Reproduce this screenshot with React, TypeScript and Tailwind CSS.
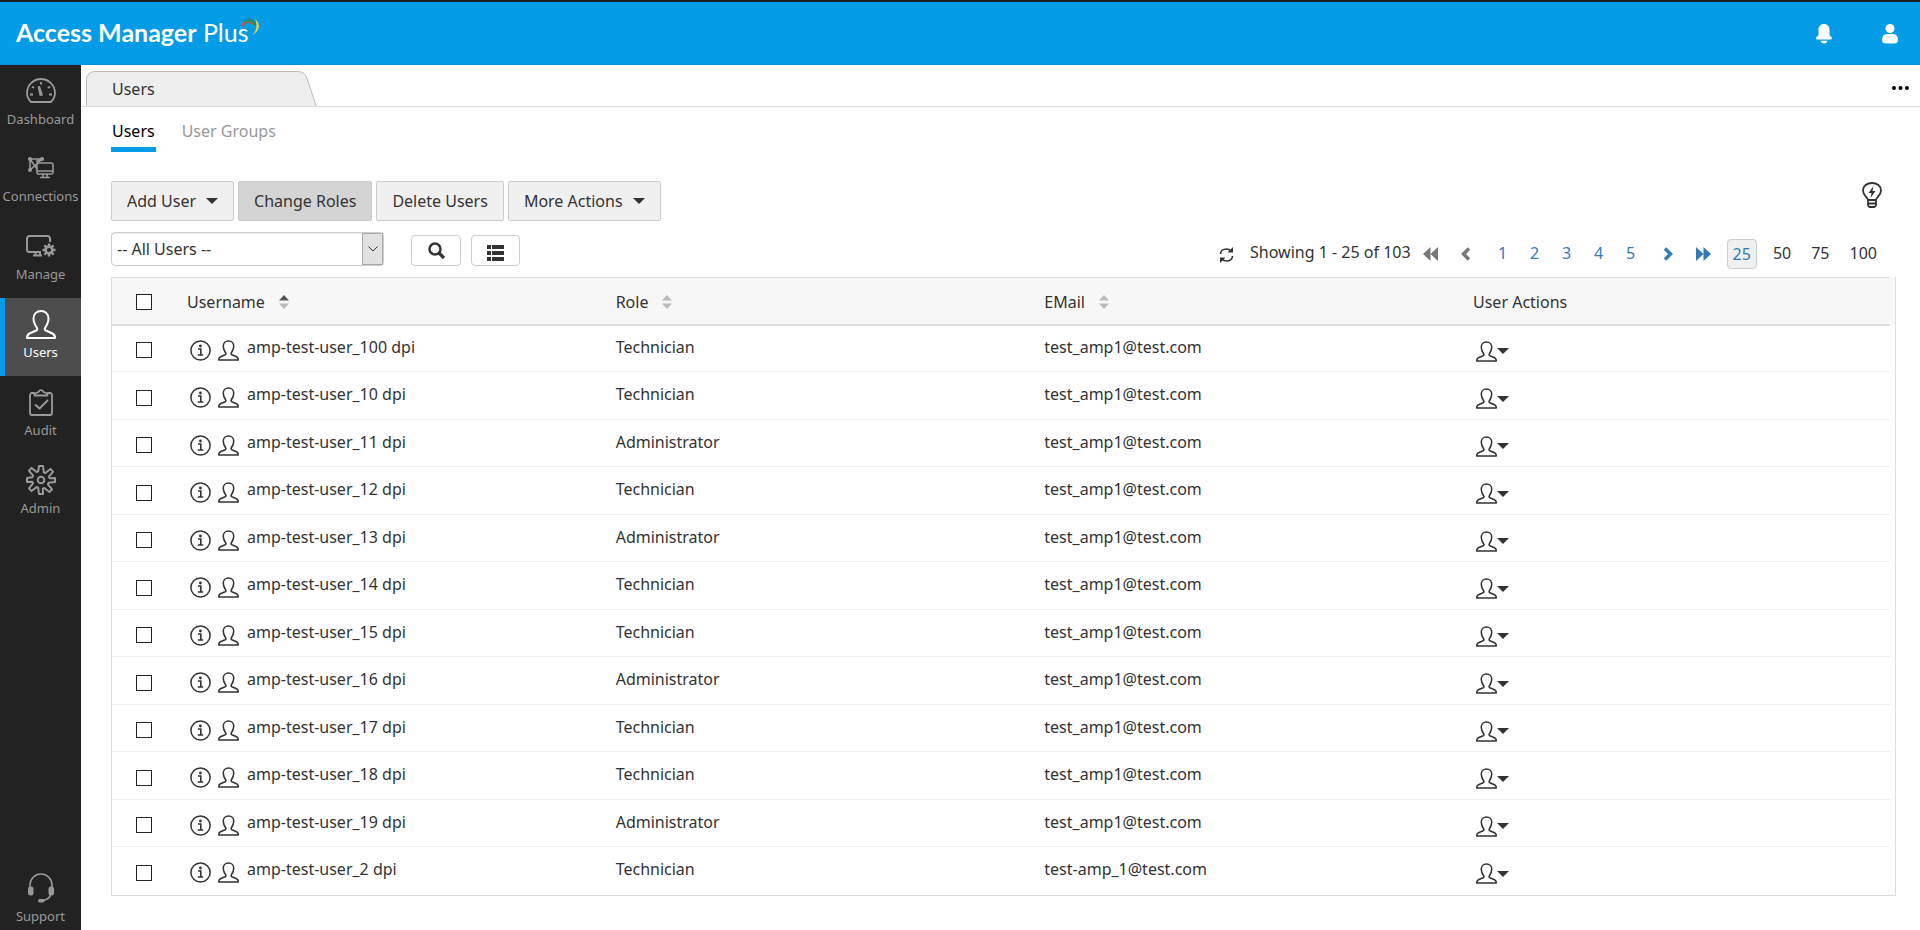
import type { ReactNode, SVGProps } from 'react';

type IconProps = SVGProps<SVGSVGElement>;

const navItems = [
  { label: 'Dashboard', icon: GaugeIcon },
  { label: 'Connections', icon: ConnectionsIcon },
  { label: 'Manage', icon: ManageIcon },
  { label: 'Users', icon: PersonIcon },
  { label: 'Audit', icon: ClipboardIcon },
  { label: 'Admin', icon: GearIcon },
];

const users = [
  { name: 'amp-test-user_100 dpi', role: 'Technician', email: 'test_amp1@test.com' },
  { name: 'amp-test-user_10 dpi', role: 'Technician', email: 'test_amp1@test.com' },
  { name: 'amp-test-user_11 dpi', role: 'Administrator', email: 'test_amp1@test.com' },
  { name: 'amp-test-user_12 dpi', role: 'Technician', email: 'test_amp1@test.com' },
  { name: 'amp-test-user_13 dpi', role: 'Administrator', email: 'test_amp1@test.com' },
  { name: 'amp-test-user_14 dpi', role: 'Technician', email: 'test_amp1@test.com' },
  { name: 'amp-test-user_15 dpi', role: 'Technician', email: 'test_amp1@test.com' },
  { name: 'amp-test-user_16 dpi', role: 'Administrator', email: 'test_amp1@test.com' },
  { name: 'amp-test-user_17 dpi', role: 'Technician', email: 'test_amp1@test.com' },
  { name: 'amp-test-user_18 dpi', role: 'Technician', email: 'test_amp1@test.com' },
  { name: 'amp-test-user_19 dpi', role: 'Administrator', email: 'test_amp1@test.com' },
  { name: 'amp-test-user_2 dpi', role: 'Technician', email: 'test-amp_1@test.com' },
];

function GaugeIcon(props: IconProps) {
  return (
    <svg width="30" height="26" viewBox="0 0 30 26" fill="none" stroke="currentColor" strokeWidth="1.8" {...props}>
      <path d="M5 24C2.500 21.500 1 18.500 1 15a14 14 0 0 1 28 0c0 3.500-1.500 6.500-4 9z" strokeLinejoin="round" />
      <path d="M11.500 8.500l2.200 9.500 3.300-.5-3-9.500z" fill="currentColor" stroke="none" />
      <path d="M4 16.500h3M23 16.500h3M6 8.500l2 1.500M24 8.500l-2 1.500M15 4v2.500" strokeWidth="1.8" />
    </svg>
  );
}

function ConnectionsIcon(props: IconProps) {
  return (
    <svg width="26" height="22" viewBox="0 0 26 22" fill="none" stroke="currentColor" strokeWidth="1.6" {...props}>
      <path d="M2 2h12L2 13zM2 2l7 10M14 2L8 4.500" />
      <rect x="9" y="6" width="16" height="11" rx="1.500" fill="#222" />
      <path d="M9 14h16M15 17v3M19 17v3M12 20.500h10" />
      <g fill="currentColor" stroke="none">
        <circle cx="2" cy="2" r="2" />
        <circle cx="14" cy="2" r="2" />
        <circle cx="2" cy="13" r="2" />
      </g>
    </svg>
  );
}

function ManageIcon(props: IconProps) {
  return (
    <svg width="30" height="22" viewBox="0 0 30 22" fill="none" stroke="currentColor" strokeWidth="2" {...props}>
      <path d="M15 17H3.500A2.500 2.500 0 0 1 1 14.500v-11A2.500 2.500 0 0 1 3.500 1h18A2.500 2.500 0 0 1 24 3.500V7M9.500 17v3M14 17v3M7 20.500h9" />
      <circle cx="23" cy="15" r="3.400" strokeWidth="2.600" />
      <path d="M23 8.500v3M23 18.500v3M16.500 15h3M26.500 15h3M18.400 10.400l2.100 2.100M25.500 17.500l2.100 2.100M18.400 19.600l2.100-2.100M25.500 12.500l2.100-2.100" strokeWidth="2.400" />
    </svg>
  );
}

function PersonIcon(props: IconProps) {
  return (
    <svg width="30" height="29" viewBox="0 0 30 29" fill="none" stroke="currentColor" strokeWidth="2" strokeLinejoin="round" {...props}>
      <path d="M15 1c-4.500 0-7.500 3.200-7.500 7.500 0 4 1.500 6.500 3.500 9.500.5 1 .2 2-.8 2.500l-6.700 3C1.500 24.500 1 26 1 28h28c0-2-.5-3.500-2.500-4.500l-6.700-3c-1-.5-1.300-1.500-.8-2.500 2-3 3.500-5.500 3.500-9.500C22.500 4.200 19.500 1 15 1z" />
    </svg>
  );
}

function ClipboardIcon(props: IconProps) {
  return (
    <svg width="24" height="28" viewBox="0 0 24 28" fill="none" stroke="currentColor" strokeWidth="1.8" strokeLinejoin="round" {...props}>
      <path d="M6 5H3a2 2 0 0 0-2 2v18a2 2 0 0 0 2 2h18a2 2 0 0 0 2-2V7a2 2 0 0 0-2-2h-3" />
      <path d="M5.500 7.500V5.800L9.500 4a2.600 2.600 0 0 1 5 0l4 1.800v1.700z" />
      <path d="M6 16.500l4.500 4 8.500-8.500" strokeWidth="2" />
    </svg>
  );
}

function GearIcon(props: IconProps) {
  return (
    <svg width="30" height="30" viewBox="0 0 30 30" fill="none" stroke="currentColor" strokeWidth="2" strokeLinejoin="round" {...props}>
      <circle cx="15" cy="15" r="3.300" />
      <path d="M13 1h4l.8 6.400 1.600.7 5-4.200 2.700 2.700-4.200 5 .7 1.600L29 13v4l-6.400.8-.7 1.600 4.200 5-2.700 2.700-5-4.200-1.600.7L17 29h-4l-.8-6.400-1.600-.7-5 4.200-2.700-2.700 4.200-5-.7-1.600L1 17v-4l5.400-.8.7-1.600-4.200-5 2.700-2.700 5 4.200 1.600-.7z" />
    </svg>
  );
}

function HeadsetIcon(props: IconProps) {
  return (
    <svg width="28" height="30" viewBox="0 0 28 30" fill="none" stroke="currentColor" strokeWidth="1.600" {...props}>
      <path d="M3 14v-2a11 11 0 0 1 22 0v2M24 21c-1 4-4 6-9 6.500" />
      <g fill="currentColor" stroke="none">
        <rect x="1" y="13.500" width="5.500" height="9" rx="2.500" />
        <rect x="21.500" y="13.500" width="5.500" height="9" rx="2.500" />
        <rect x="11" y="26" width="6.500" height="3.500" rx="1.700" />
      </g>
    </svg>
  );
}

function InfoIcon(props: IconProps) {
  return (
    <svg width="21" height="21" viewBox="0 0 21 21" fill="none" stroke="currentColor" {...props}>
      <circle cx="10.500" cy="10.500" r="9.600" strokeWidth="1.500" />
      <path d="M8 9h2.800v5.700M7.800 15h5.400" strokeWidth="1.600" />
      <circle cx="10.400" cy="6" r="1.400" fill="currentColor" stroke="none" />
    </svg>
  );
}

function SmallPersonIcon(props: IconProps) {
  return <PersonIcon width="21" height="21" strokeWidth="2.200" {...props} />;
}

function Caret() {
  return (
    <svg width="12" height="6" viewBox="0 0 12 6" fill="currentColor" aria-hidden="true">
      <path d="M0 0h12L6 6z" />
    </svg>
  );
}

function SortArrows({ active = false }: { active?: boolean }) {
  return (
    <svg width="10" height="14" viewBox="0 0 10 14" aria-hidden="true">
      <path d="M5 0l5 5.500H0z" fill={active ? '#555' : '#bbb'} />
      <path d="M5 14L0 8.500h10z" fill="#bbb" />
    </svg>
  );
}

function ToolbarButton({ children, pressed = false }: { children: ReactNode; pressed?: boolean }) {
  return (
    <button
      type="button"
      className={`flex h-10 items-center gap-[10px] rounded-xs border border-[#ccc] px-[15px] ${
        pressed ? 'bg-[#d4d4d4]' : 'bg-[#f0f0f0]'
      }`}
    >
      {children}
    </button>
  );
}

function Pager() {
  return (
    <nav aria-label="Pages" className="flex items-center text-[#337ab7]">
      <button type="button" aria-label="Refresh" className="mr-4 pt-[2px] text-[#333]">
        <svg width="15" height="16" viewBox="0 0 15 16" fill="none" stroke="currentColor" strokeWidth="1.700">
          <path d="M1.500 7C1.500 4 4 2 7.500 2c2 0 3.500.8 4.500 2M13.500 9c0 3-2.500 5-6 5-2 0-3.500-.8-4.500-2" />
          <path d="M14 0v5.500H8.500zM1 16v-5.500h5.500z" fill="currentColor" stroke="none" />
        </svg>
      </button>
      <span className="mr-3 pb-1 text-[#333]">Showing 1 - 25 of 103</span>
      <button type="button" aria-label="First page" className="mr-[22px] text-[#777]">
        <svg width="15" height="14" viewBox="0 0 15 14" fill="currentColor">
          <path d="M7.500 0v14L0 7zM15 0v14L7.500 7z" />
        </svg>
      </button>
      <button type="button" aria-label="Previous page" className="text-[#777]">
        <svg width="11" height="14" viewBox="0 0 11 14" fill="none" stroke="currentColor" strokeWidth="3.500">
          <path d="M9 1.500L3.500 7 9 12.500" />
        </svg>
      </button>
      <div className="mx-4 flex pb-[2px]">
        {[1, 2, 3, 4, 5].map((page) => (
          <a key={page} href={`#page-${page}`} className="w-8 text-center">
            {page}
          </a>
        ))}
      </div>
      <button type="button" aria-label="Next page">
        <svg width="11" height="14" viewBox="0 0 11 14" fill="none" stroke="currentColor" strokeWidth="3.500">
          <path d="M2 1.500L7.500 7 2 12.500" />
        </svg>
      </button>
      <button type="button" aria-label="Last page" className="ml-[22px]">
        <svg width="15" height="14" viewBox="0 0 15 14" fill="currentColor">
          <path d="M0 0v14l7.500-7zM7.500 0v14L15 7z" />
        </svg>
      </button>
      <a
        href="#show-25"
        className="mx-4 flex h-[30px] items-center rounded-sm border border-[#ccc] bg-[#f0f0f0] px-[5px]"
      >
        25
      </a>
      <div className="flex gap-5 pb-[2px] text-[#333]">
        <a href="#show-50">50</a>
        <a href="#show-75">75</a>
        <a href="#show-100">100</a>
      </div>
    </nav>
  );
}

function Checkbox({ label }: { label: string }) {
  return (
    <input
      type="checkbox"
      aria-label={label}
      className="block size-4 appearance-none border border-[#222] bg-white checked:bg-[#222]"
    />
  );
}

export default function App() {
  return (
    <div className="flex min-h-screen flex-col bg-white font-['Noto_Sans',sans-serif] text-base text-[#333]">
      <header className="flex h-[65px] items-center justify-between border-t-2 border-b border-t-[#1a1a24] border-b-[#0b8fd6] bg-[#049be7] pr-[21px] pl-4 text-white">
        <div className="flex pb-[2px]">
          <h1 className="font-['Lato',sans-serif] text-[25px] leading-8">
            <span className="font-bold">Access Manager</span> Plus
          </h1>
          {/* three-colour swoosh over the last letter */}
          <svg width="19" height="18" viewBox="0 0 19 18" fill="none" className="mt-[2px] -ml-2">
            <path d="M1 8C4 3 9 2.500 13 6" stroke="#c8503c" strokeWidth="2" />
            <path d="M3 3.500C8-.5 14 2 14.500 8" stroke="#12879a" strokeWidth="2.400" />
            <path d="M4 4.500C8 2 12 3 14 7.500" stroke="#2a9a50" strokeWidth="1.200" />
            <path d="M14 1c6 4 5 13-3 16 5-4 5.500-10 3-16z" fill="#f2cf3b" />
          </svg>
        </div>
        <div className="flex items-center gap-[49px] pt-[2px]">
          <button type="button" aria-label="Notifications">
            <svg width="16" height="20" viewBox="0 0 16 20" fill="currentColor">
              <path d="M8 0C4.500 0 2.500 2.500 2.500 6v5.500L.8 12.800C-.5 14 0 15.500 1.500 15.500h13c1.500 0 2-1.500.7-2.700l-1.700-1.300V6C13.500 2.500 11.500 0 8 0zM4.500 16.800h7C11 18.500 9.800 19.500 8 19.500s-3-1-3.500-2.700z" />
            </svg>
          </button>
          <button type="button" aria-label="Account">
            <svg width="18" height="20" viewBox="0 0 18 20" fill="currentColor">
              <circle cx="9" cy="4.500" r="4.500" />
              <path d="M6 10h6c3.500 0 5 3 5 6 0 2.500-1.500 3.500-4 3.500H5c-2.500 0-4-1-4-3.500 0-3 1.500-6 5-6z" />
            </svg>
          </button>
        </div>
      </header>

      <div className="flex flex-1">
        <nav aria-label="Main" className="flex w-[81px] shrink-0 flex-col bg-[#222] text-[13px] leading-5 text-[#999]">
          {navItems.map(({ label, icon: Icon }) => (
            <a
              key={label}
              href={`#${label.toLowerCase()}`}
              className={`flex h-[78px] flex-col items-center pt-[10px] first:h-[77px] ${
                label === 'Users' ? 'border-l-5 border-[#049be7] bg-[#4d4d4d] pr-[5px] text-white' : ''
              }`}
            >
              <span className="mb-[2px] flex h-8 items-center">
                <Icon />
              </span>
              {label}
            </a>
          ))}
          <a href="#support" className="mt-auto flex flex-col items-center pb-1">
            <HeadsetIcon className="mb-[3px]" />
            Support
          </a>
        </nav>

        <main className="min-w-0 flex-1">
          <div className="flex h-[42px] items-end justify-between border-b border-[#ddd] pr-[11px] pl-[5px]">
            <div className="relative h-[35px] w-[231px]">
              <svg width="231" height="35" viewBox="0 0 231 35" className="absolute inset-0">
                <path d="M.5 36V8.500a8 8 0 0 1 8-8h203c5 0 7.500 2 9.500 7l9.500 28.500" fill="#eee" stroke="#bbb" />
              </svg>
              <span className="relative block pt-[6px] pl-[26px]">Users</span>
            </div>
            <button type="button" aria-label="More" className="mb-4 text-black">
              <svg width="17" height="4" viewBox="0 0 17 4" fill="currentColor">
                <circle cx="2" cy="2" r="2" />
                <circle cx="8.500" cy="2" r="2" />
                <circle cx="15" cy="2" r="2" />
              </svg>
            </button>
          </div>

          <div className="pr-6 pl-[30px]">
            <div className="flex gap-[26px] pt-3">
              <a href="#users" className="border-b-5 border-[#049be7] px-px pb-1 text-black">
                Users
              </a>
              <a href="#groups" className="text-[#999]">
                User Groups
              </a>
            </div>

            <div className="mt-[29px] flex items-center gap-1">
              <ToolbarButton>
                Add User <Caret />
              </ToolbarButton>
              <ToolbarButton pressed>Change Roles</ToolbarButton>
              <ToolbarButton>Delete Users</ToolbarButton>
              <ToolbarButton>
                More Actions <Caret />
              </ToolbarButton>
              <button type="button" aria-label="Tips" className="mr-[14px] mb-3 ml-auto">
                <svg width="20" height="26" viewBox="0 0 20 26" fill="none" stroke="currentColor" strokeWidth="1.800">
                  <path d="M6 18c0-3-5-4-5-9.500C1 4 5 1 10 1s9 3 9 7.500C19 14 14 15 14 18zM6 18v5.500L7.500 25h5l1.500-1.500V18M6 21.500h8" />
                  <path d="M11.500 4L6.500 11h3l-1 5 5-7h-3z" fill="currentColor" stroke="none" />
                </svg>
              </button>
            </div>

            <div className="mt-[11px] flex items-start">
              <div className="relative w-[273px]">
                <select
                  aria-label="Filter users"
                  className="block h-[34px] w-full appearance-none rounded-sm border border-[#ccc] bg-white pr-6 pb-px pl-[5px] shadow-[inset_0_1px_1px_#0001]"
                >
                  <option>-- All Users --</option>
                </select>
                <span className="pointer-events-none absolute top-px right-px flex h-8 w-[21px] items-center justify-center border border-[#aaa] bg-[#e1e1e1]">
                  <svg width="10" height="6" viewBox="0 0 10 6" fill="none" stroke="currentColor">
                    <path d="M.5.5L5 5 9.500.5" />
                  </svg>
                </span>
              </div>
              <button type="button" aria-label="Search" className="mt-[3px] ml-[27px] flex h-[31px] w-[50px] items-center justify-center rounded-sm border border-[#ccc]">
                <svg width="17" height="17" viewBox="0 0 17 17" fill="none" stroke="currentColor" strokeWidth="2.500">
                  <circle cx="7" cy="7" r="5.500" />
                  <path d="M11 11l5 5" strokeWidth="3.200" />
                </svg>
              </button>
              <button type="button" aria-label="Columns" className="mt-[3px] ml-[10px] flex h-[31px] w-[49px] items-center justify-center rounded-sm border border-[#ccc] pt-1">
                <svg width="17" height="16" viewBox="0 0 17 16" fill="currentColor">
                  <path d="M0 0h4v4H0zM5 0h12v4H5zM0 6h4v4H0zM5 6h12v4H5zM0 12h4v4H0zM5 12h12v4H5z" />
                </svg>
              </button>
              <div className="mt-[7px] mr-[19px] ml-auto">
                <Pager />
              </div>
            </div>

            <div className="mt-2 border-x border-b border-[#ddd] bg-[linear-gradient(#f7f7f7_48px,white_48px)] pr-[5px]">
              <table className="w-full table-fixed text-left">
                <colgroup>
                  <col className="w-[75px]" />
                  <col />
                  <col />
                  <col />
                  <col className="w-[417px]" />
                </colgroup>
                <thead>
                  <tr className="h-[47px] border-t border-b-2 border-[#ddd]">
                    <th className="pt-[3px] pl-6">
                      <Checkbox label="Select all users" />
                    </th>
                    <th className="pt-[3px] font-normal">
                      <button type="button" className="flex items-center gap-[14px]">
                        Username <SortArrows active />
                      </button>
                    </th>
                    <th className="pt-[3px] font-normal">
                      <button type="button" className="flex items-center gap-[14px]">
                        Role <SortArrows />
                      </button>
                    </th>
                    <th className="pt-[3px] font-normal">
                      <button type="button" className="flex items-center gap-[14px]">
                        EMail <SortArrows />
                      </button>
                    </th>
                    <th className="pt-[3px] font-normal">User Actions</th>
                  </tr>
                </thead>
                <tbody>
                  {users.map((user) => (
                    <tr key={user.name} className="h-[47px] border-b border-[#eee] last:border-b-0 even:h-12">
                      <td className="pt-1 pl-6">
                        <Checkbox label={`Select ${user.name}`} />
                      </td>
                      <td className="pb-[3px]">
                        <div className="flex items-center">
                          <InfoIcon className="mt-[7px] ml-[3px]" />
                          <SmallPersonIcon className="mt-[7px] mr-2 ml-[7px]" />
                          {user.name}
                        </div>
                      </td>
                      <td className="pb-[3px]">{user.role}</td>
                      <td className="pb-[3px]">{user.email}</td>
                      <td>
                        <button
                          type="button"
                          aria-label={`Actions for ${user.name}`}
                          className="mt-[6px] ml-[3px] flex items-center"
                        >
                          <SmallPersonIcon />
                          <Caret />
                        </button>
                      </td>
                    </tr>
                  ))}
                </tbody>
              </table>
            </div>
          </div>
        </main>
      </div>
    </div>
  );
}
